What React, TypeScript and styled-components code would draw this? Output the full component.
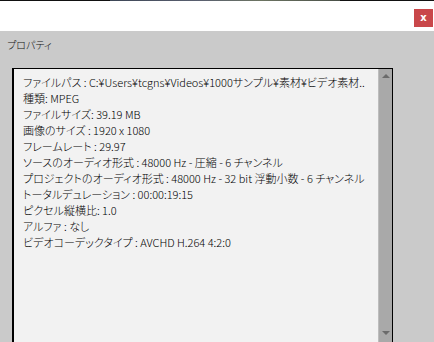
import React from "react";
import styled, { createGlobalStyle } from "styled-components";

const Global = createGlobalStyle`
  html, body { margin: 0; padding: 0; background: #cacaca; overflow: hidden; }
  body { width: 434px; height: 342px; }
`;

const Screen = styled.div`
  width: 434px;
  height: 342px;
  display: flex;
  flex-direction: column;
  background: #cacaca;
  overflow: hidden;
`;

const TopStrip = styled.div`
  height: 1px;
  flex: none;
  background: linear-gradient(
    to right,
    #111 0,
    #111 110px,
    #3d4656 110px,
    #5a6070 200px,
    #6c7462 260px,
    #4a5048 340px,
    #111 340px
  );
`;

const TitleBar = styled.div`
  height: 30px;
  flex: none;
  background: #ffffff;
  display: flex;
  justify-content: flex-end;
  align-items: flex-start;
  padding-top: 8px;
  box-sizing: border-box;
`;

const CloseButton = styled.div`
  width: 19px;
  height: 18px;
  margin-right: 1px;
  background: #c9474a;
  color: #ffffff;
  font-family: "DejaVu Sans", sans-serif;
  font-weight: bold;
  font-size: 10px;
  line-height: 17px;
  text-align: center;
`;

const Body = styled.div`
  flex: 1;
  display: flex;
  flex-direction: column;
  padding: 6px 0 0 7px;
  min-height: 0;
`;

const Heading = styled.div`
  font-family: "Noto Sans CJK JP", sans-serif;
  font-feature-settings: "palt";
  font-weight: 300;
  font-size: 10px;
  line-height: 16px;
  color: #111;
  height: 16px;
`;

const ListBox = styled.div`
  margin: 15px 0 0 5px;
  width: 378px;
  flex: 1;
  display: flex;
  border-left: 2px solid #000;
  border-top: 1px solid #000;
  border-right: 1px solid #000;
  background: #f2f2f2;
  min-height: 0;
`;

const Content = styled.div`
  flex: 1;
  padding: 5px 0 0 9px;
  font-family: "Noto Sans CJK JP", sans-serif;
  font-feature-settings: "palt";
  font-weight: 300;
  font-size: 11px;
  line-height: 16px;
  color: #000;
  overflow: hidden;
`;

const Line = styled.div`
  white-space: nowrap;
  height: 16px;
`;

const ScrollBar = styled.div`
  width: 13px;
  flex: none;
  background: #a9a9a9;
  border-left: 1px solid #bdbdbd;
  display: flex;
  flex-direction: column;
  justify-content: space-between;
  align-items: center;
  padding: 5px 0 7px;
`;

const Arrow = styled.div<{ $down?: boolean }>`
  width: 0;
  height: 0;
  border-left: 4px solid transparent;
  border-right: 4px solid transparent;
  ${(p) =>
    p.$down
      ? "border-top: 4px solid #6b6b6b;"
      : "border-bottom: 4px solid #6b6b6b;"}
`;

const lines = [
  "ファイルパス : C:¥Users¥tcgns¥Videos¥1000サンプル¥素材¥ビデオ素材..",
  "種類: MPEG",
  "ファイルサイズ: 39.19 MB",
  "画像のサイズ : 1920 x 1080",
  "フレームレート : 29.97",
  "ソースのオーディオ形式 : 48000 Hz - 圧縮 - 6 チャンネル",
  "プロジェクトのオーディオ形式 : 48000 Hz - 32 bit 浮動小数 - 6 チャンネル",
  "トータルデュレーション : 00:00:19:15",
  "ピクセル縦横比: 1.0",
  "アルファ : なし",
  "ビデオコーデックタイプ : AVCHD H.264 4:2:0",
];

export default function App() {
  return (
    <Screen>
      <Global />
      <TopStrip />
      <TitleBar>
        <CloseButton>x</CloseButton>
      </TitleBar>
      <Body>
        <Heading>プロパティ</Heading>
        <ListBox>
          <Content>
            {lines.map((l, i) => (
              <Line key={i}>{l}</Line>
            ))}
          </Content>
          <ScrollBar>
            <Arrow />
            <Arrow $down />
          </ScrollBar>
        </ListBox>
      </Body>
    </Screen>
  );
}
